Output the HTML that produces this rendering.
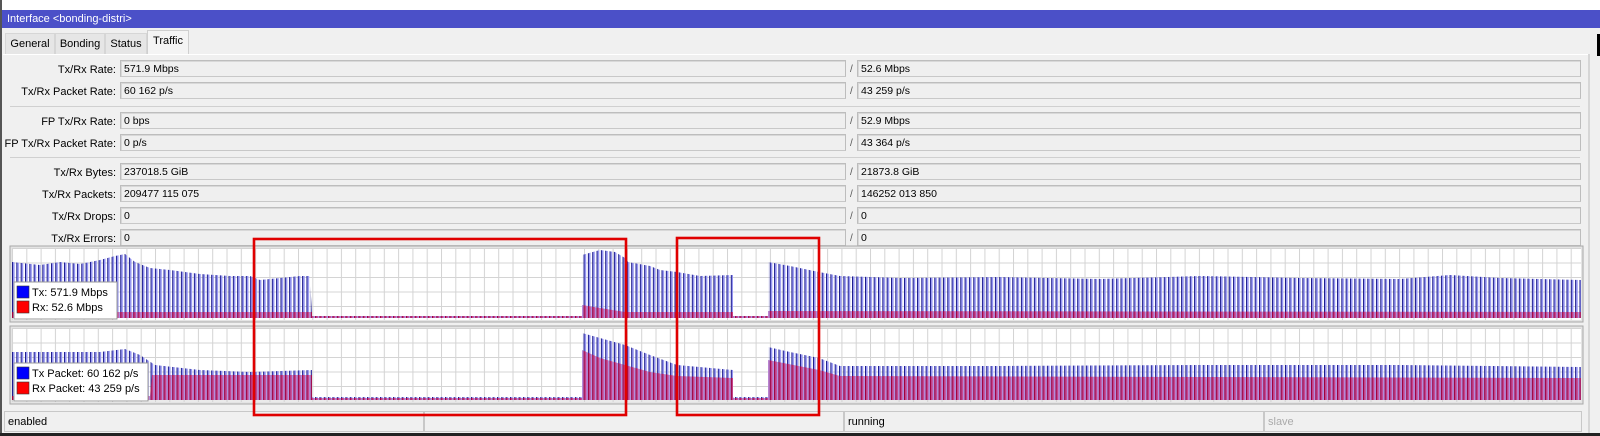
<!DOCTYPE html>
<html><head><meta charset="utf-8"><style>
*{margin:0;padding:0;box-sizing:border-box}
body{width:1600px;height:436px;background:#f0f0f0;position:relative;overflow:hidden;font-family:"Liberation Sans",Arial,sans-serif;font-size:11px;color:#000}
.abs{position:absolute}
.title{left:2px;top:10px;width:1598px;height:18px;background:#4b50c8;color:#fff;padding:3px 0 0 5px;font-size:11px}
.tab{position:absolute;top:33px;height:21px;border:1px solid #d6d6d6;border-bottom:none;background:#e6e6e6;padding:4px 0 0 0;text-align:center;font-size:11px}
.tab.act{top:30px;height:25px;background:#f4f4f4;border-color:#cfcfcf}
.lbl{position:absolute;left:0;width:116px;text-align:right;font-size:11px;margin-top:2px}
.box{position:absolute;height:17px;border:1px solid #bdbdbd;border-bottom-color:#c8c8c8;background:#efefef;padding:2px 0 0 3px;font-size:10.5px;box-shadow:inset 1px 1px 0 #d8d8d8}
.sl{position:absolute;left:850px;font-size:10px;color:#555;margin-top:1px}
.sep{position:absolute;left:10px;width:1570px;height:1px;background:#d0d0d0}
.st{position:absolute;top:411px;height:21px;border:1px solid #c8c8c8;background:#f0f0f0;padding:4px 0 0 3px;font-size:11px}
</style></head><body>
<div class="abs" style="left:0;top:0;width:1600px;height:10px;background:#fff"></div>
<div class="abs" style="left:0;top:0;width:2px;height:436px;background:#555"></div>
<div class="abs title">Interface &lt;bonding-distri&gt;</div>
<div class="tab" style="left:5px;width:50px">General</div>
<div class="tab" style="left:55px;width:50px">Bonding</div>
<div class="tab" style="left:105px;width:42px">Status</div>
<div class="tab act" style="left:147px;width:42px">Traffic</div>
<div class="abs" style="left:3px;top:54px;width:1586px;height:1px;background:#fff"></div>
<div class="abs" style="left:1588px;top:54px;width:2px;height:380px;background:#d6d6d6"></div>
<div class="abs" style="left:1597px;top:34px;width:3px;height:22px;background:#000"></div>

<div class="lbl" style="top:62px">Tx/Rx Rate:</div><div class="box" style="left:120px;top:60px;width:726px">571.9 Mbps</div><div class="sl" style="top:63px">/</div><div class="box" style="left:857px;top:60px;width:724px">52.6 Mbps</div>
<div class="lbl" style="top:84px">Tx/Rx Packet Rate:</div><div class="box" style="left:120px;top:82px;width:726px">60 162 p/s</div><div class="sl" style="top:85px">/</div><div class="box" style="left:857px;top:82px;width:724px">43 259 p/s</div>
<div class="sep" style="top:106px"></div>
<div class="lbl" style="top:114px">FP Tx/Rx Rate:</div><div class="box" style="left:120px;top:112px;width:726px">0 bps</div><div class="sl" style="top:115px">/</div><div class="box" style="left:857px;top:112px;width:724px">52.9 Mbps</div>
<div class="lbl" style="top:136px">FP Tx/Rx Packet Rate:</div><div class="box" style="left:120px;top:134px;width:726px">0 p/s</div><div class="sl" style="top:137px">/</div><div class="box" style="left:857px;top:134px;width:724px">43 364 p/s</div>
<div class="sep" style="top:157px"></div>
<div class="lbl" style="top:165px">Tx/Rx Bytes:</div><div class="box" style="left:120px;top:163px;width:726px">237018.5 GiB</div><div class="sl" style="top:166px">/</div><div class="box" style="left:857px;top:163px;width:724px">21873.8 GiB</div>
<div class="lbl" style="top:187px">Tx/Rx Packets:</div><div class="box" style="left:120px;top:185px;width:726px">209477 115 075</div><div class="sl" style="top:188px">/</div><div class="box" style="left:857px;top:185px;width:724px">146252 013 850</div>
<div class="lbl" style="top:209px">Tx/Rx Drops:</div><div class="box" style="left:120px;top:207px;width:726px">0</div><div class="sl" style="top:210px">/</div><div class="box" style="left:857px;top:207px;width:724px">0</div>
<div class="lbl" style="top:231px">Tx/Rx Errors:</div><div class="box" style="left:120px;top:229px;width:726px">0</div><div class="sl" style="top:232px">/</div><div class="box" style="left:857px;top:229px;width:724px">0</div>

<div class="st" style="left:4px;width:420px">enabled</div>
<div class="st" style="left:424px;width:420px"></div>
<div class="st" style="left:844px;width:420px">running</div>
<div class="st" style="left:1264px;width:318px;color:#aaa">slave</div>
<div class="abs" style="left:0;top:433px;width:1600px;height:3px;background:#222"></div>

<svg class="abs" style="left:0;top:0" width="1600" height="436" xmlns="http://www.w3.org/2000/svg">
<defs>
<pattern id="g" x="12" y="248" width="14.3" height="14.5" patternUnits="userSpaceOnUse"><rect width="14.3" height="14.5" fill="#fff"/><rect width="1" height="14.5" fill="#d4d4d4"/><rect width="14.3" height="1" fill="#d4d4d4"/></pattern>
<pattern id="g2" x="12" y="328" width="14.3" height="14.5" patternUnits="userSpaceOnUse"><rect width="14.3" height="14.5" fill="#fff"/><rect width="1" height="14.5" fill="#d4d4d4"/><rect width="14.3" height="1" fill="#d4d4d4"/></pattern>
<pattern id="b" x="12" y="0" width="4.33" height="10" patternUnits="userSpaceOnUse"><rect x="0" width="1" height="10" fill="#1a1a8c"/><rect x="1" width="1.6" height="10" fill="#9494f0"/></pattern>
<pattern id="r" x="12" y="0" width="4.33" height="10" patternUnits="userSpaceOnUse"><rect x="0" width="1.2" height="10" fill="#a0003a"/><rect x="1.2" width="1.6" height="10" fill="#c8408a"/><rect x="2.8" width="1.53" height="10" fill="#b090e0"/></pattern>
</defs>
<rect x="10" y="246" width="1573" height="76" fill="#e4e4e4" stroke="#a8a8a8"/>
<rect x="12" y="248" width="1569" height="72" fill="url(#g)"/>
<rect x="10" y="326" width="1573" height="78" fill="#e4e4e4" stroke="#a8a8a8"/>
<rect x="12" y="328" width="1569" height="74" fill="url(#g2)"/>
<polygon fill="url(#b)" points="12,318 12,262 40,265 60,262 80,264 100,260 115,256 125,254 135,262 150,268 170,270 200,274 230,276 250,276 260,280 280,278 300,276 310,276 312,316 582,316 582,255 600,250 615,252 625,258 628,262 650,266 660,270 677,272 700,276 733,275 733,316 768,316 768,262 790,266 819,272 840,276 900,278 1000,277 1100,279 1200,276 1300,278 1400,279 1450,275 1500,278 1581,280 1581,318"/>
<polygon fill="url(#r)" points="12,318 12,312 312,312 312,316 582,316 582,305 600,308 625,312 733,312 733,316 768,316 768,311 1581,312 1581,318"/>
<polygon fill="url(#b)" points="12,400 12,352 100,352 125,349 140,355 155,365 200,370 250,372 312,370 312,397 582,397 582,333 600,338 625,345 650,355 677,365 733,370 733,397 768,397 768,347 790,352 819,358 840,366 1000,366 1200,365 1400,365 1581,367 1581,400"/>
<polygon fill="url(#r)" points="12,400 12,396 150,396 152,375 312,375 312,398 582,398 582,350 600,358 625,365 650,372 677,376 733,378 733,398 768,398 768,360 819,370 840,376 1581,378 1581,400"/>
<rect x="14" y="282" width="103" height="37" fill="#fff" stroke="#999"/>
<rect x="17" y="286" width="12" height="12" fill="#0000ff" stroke="#333" stroke-width=".6"/>
<rect x="17" y="301" width="12" height="12" fill="#ff0000" stroke="#333" stroke-width=".6"/>
<text x="32" y="296" font-family="Liberation Sans,Arial,sans-serif" font-size="11">Tx:  571.9 Mbps</text>
<text x="32" y="311" font-family="Liberation Sans,Arial,sans-serif" font-size="11">Rx:  52.6 Mbps</text>
<rect x="14" y="363" width="134" height="38" fill="#fff" stroke="#999"/>
<rect x="17" y="367" width="12" height="12" fill="#0000ff" stroke="#333" stroke-width=".6"/>
<rect x="17" y="382" width="12" height="12" fill="#ff0000" stroke="#333" stroke-width=".6"/>
<text x="32" y="377" font-family="Liberation Sans,Arial,sans-serif" font-size="11">Tx Packet:  60 162 p/s</text>
<text x="32" y="392" font-family="Liberation Sans,Arial,sans-serif" font-size="11">Rx Packet:  43 259 p/s</text>
<rect x="254" y="239" width="372" height="176" fill="none" stroke="#e00000" stroke-width="2.6"/>
<rect x="677" y="238" width="142" height="177" fill="none" stroke="#e00000" stroke-width="2.6"/>
</svg>
</body></html>
